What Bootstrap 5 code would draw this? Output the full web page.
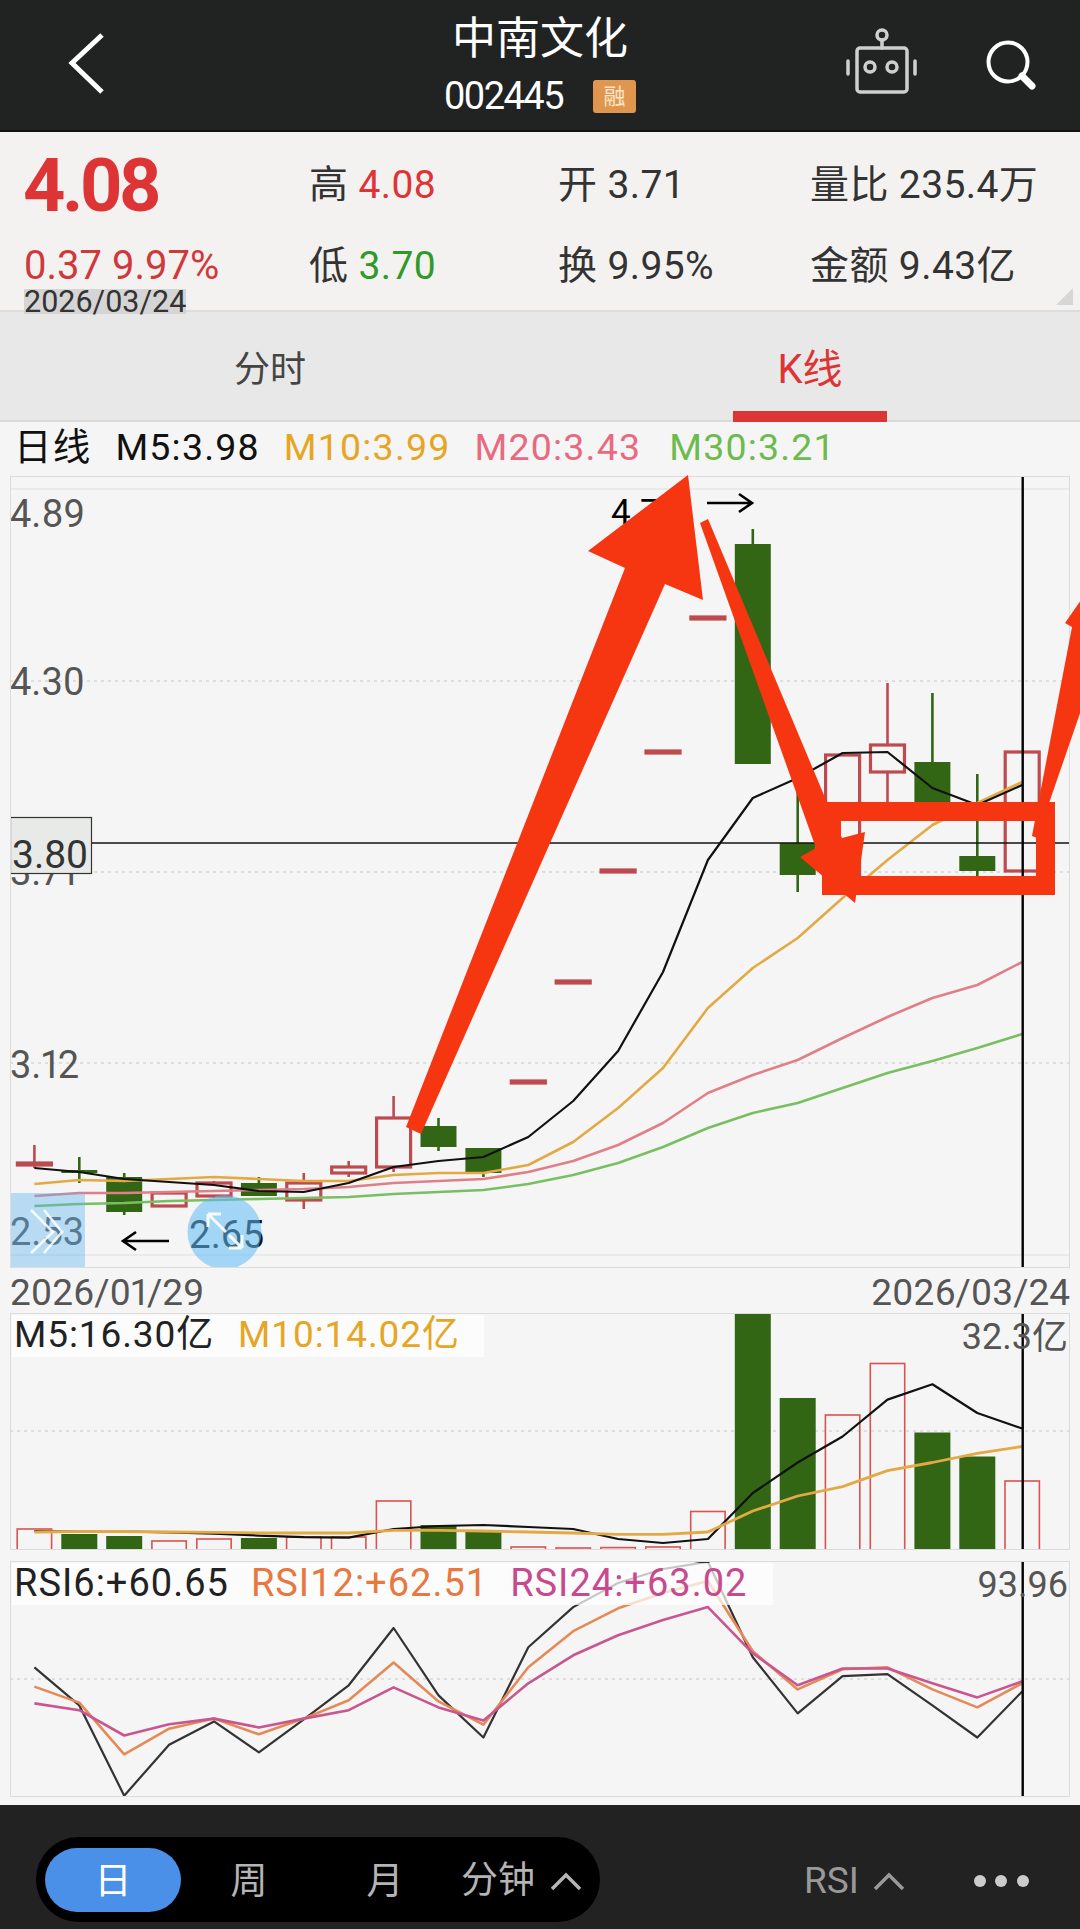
<!DOCTYPE html>
<html lang="zh-CN">
<head>
  <meta charset="UTF-8"/>
  <meta name="viewport" content="width=device-width, initial-scale=1.0"/>
  <title>中南文化 002445</title>
  <link href="https://cdn.jsdelivr.net/npm/bootstrap@5.3.0/dist/css/bootstrap.min.css" rel="stylesheet"/>
  <style>
    body { width: 1080px; height: 1929px; position: relative; overflow: hidden; background-color: #f5f5f5; font-family: Roboto, "Noto Sans CJK SC", sans-serif; color: #333; }
    svg { display: block; }

    .top-bar { height: 132px; background-color: #212322; border-bottom: 2px solid #111; }
    .top-side { width: 240px; }
    .stock-title { font-size: 44px; line-height: 52px; color: #fff; padding-top: 13px; }
    .stock-code { font-size: 38px; line-height: 44px; color: #fff; letter-spacing: -1.5px; gap: 30px; margin-top: 9px; }
    .margin-tag { width: 43px; height: 33px; background-color: #e0964f; color: #f9e6cc; font-size: 22px; line-height: 33px; letter-spacing: 0; border-radius: 3px; text-align: center; }

    .quote-grid { height: 180px; background-color: #f3f2f1; border-bottom: 2px solid #ddd; display: grid; grid-template-columns: 285px 249px 252px 1fr; grid-template-rows: 108px 72px; padding-left: 24px; position: relative; font-size: 39px; line-height: 50px; letter-spacing: .4px; }
    .quote-cell { padding-top: 1px; white-space: nowrap; }
    .quote-cell.top-row { padding-top: 28px; }
    .price-now { font-size: 74px; line-height: 108px; font-weight: 700; letter-spacing: -3.5px; color: #dd3436; margin-left: -1px; }
    .price-change { font-size: 40px; line-height: 46px; color: #d0393b; letter-spacing: 0; margin-top: 3px; height: 46px; white-space: nowrap; }
    .price-date { display: inline-block; font-size: 30.5px; line-height: 25px; height: 25px; background-color: #d5d5d5; color: #333; letter-spacing: 0; vertical-align: top; }
    .up { color: #dd3436; }
    .down { color: #2f9a28; }
    .corner-mark { position: absolute; right: 7px; bottom: 5px; width: 0; height: 0; border-left: 17px solid transparent; border-bottom: 17px solid #d6d6d6; }

    .tab-strip { height: 110px; background-color: #e8e8e8; border-bottom: 2px solid #d8d8d8; font-size: 36px; color: #444; }
    .tab-item { padding-top: 18px; width: 154px; height: 110px; text-align: center; line-height: 80px; }
    .tab-item.active { color: #dd3436; font-size: 40px; border-bottom: 11px solid #dd3436; }

    .ma-legend { height: 54px; padding-left: 14px; gap: 24px; font-size: 37.5px; line-height: 50px; letter-spacing: 1.2px; color: #111; }
    .c-ma10 { color: #e6a623; }
    .c-ma20 { color: #e86a80; }
    .c-ma30 { color: #6dbb4f; }

    .plot-box { margin-left: 10px; width: 1060px; position: relative; background-color: #f5f5f5; outline: 1.5px solid #dcdcdc; outline-offset: -1px; }
    .plot-main { height: 792px; }
    .plot-volume { height: 237px; margin-top: 1px; }
    .plot-rsi { height: 236px; margin-top: 11px; }
    .axis-text { font-size: 38px; fill: #555; font-variant-numeric: proportional-nums; }
    .date-row { height: 44px; margin: 0 10px; font-size: 37px; line-height: 50px; color: #555; font-variant-numeric: proportional-nums; }
    .plot-legend { position: absolute; left: 2px; top: 2px; height: 42px; background-color: rgba(255,255,255,.72); font-size: 37px; line-height: 40px; color: #222; letter-spacing: .9px; white-space: nowrap; padding-left: 2px; }
    .plot-legend.vol-legend { width: 472px; gap: 24px; }
    .plot-legend.rsi-legend { width: 761px; gap: 22px; font-size: 38px; letter-spacing: 1px; }
    .c-rsi12 { color: #e67840; }
    .c-rsi24 { color: #c84a8e; }
    .plot-peak { position: absolute; right: 2px; top: 4px; font-size: 36px; line-height: 40px; color: #555; }

    .bottom-bar { height: 124px; margin-top: 8px; background-color: #222; padding: 32px 0 0 36px; font-size: 37px; color: #b4b4b4; }
    .period-pill { width: 564px; height: 85px; background-color: #000; border-radius: 43px; padding: 11px 9px; }
    .period-item { width: 136px; height: 64px; line-height: 68px; text-align: center; border-radius: 32px; }
    .period-item.active { background-color: #4a90e8; color: #fff; }
    .period-more { gap: 15px; padding-left: 8px; padding-top: 3px; line-height: 62px; }
    .bar-right { margin-left: 204px; height: 88px; color: #999; gap: 14px; }
    .more-dots { margin-left: 46px; }
  </style>
</head>
<body>
  <!-- title bar -->
  <header class="top-bar d-flex justify-content-between">
    <div class="top-side">
      <svg width="240" height="130"><path d="M102 35 L72 63 L102 92" fill="none" stroke="#fff" stroke-width="5"/></svg>
    </div>
    <div class="d-flex flex-column align-items-center">
      <div class="stock-title">中南文化</div>
      <div class="stock-code d-flex align-items-center"><span>002445</span><span class="margin-tag">融</span></div>
    </div>
    <div class="top-side">
      <svg width="240" height="130" viewBox="840 0 240 130" fill="none">
        <g stroke="#cfcfcf" stroke-width="3.5" stroke-linecap="round">
          <rect x="857" y="48" width="50" height="44" rx="3"/>
          <circle cx="882" cy="35" r="5"/>
          <path d="M882 40V48M848 61V74M915 61V74"/>
          <circle cx="870" cy="67" r="5"/>
          <circle cx="892" cy="67" r="5"/>
        </g>
        <circle cx="1008" cy="62" r="19.5" stroke="#fff" stroke-width="4"/>
        <path d="M1022 76L1032 86" stroke="#fff" stroke-width="7" stroke-linecap="round"/>
      </svg>
    </div>
  </header>

  <!-- quote summary -->
  <section class="quote-grid">
    <div class="price-now">4.08</div>
    <div class="quote-cell top-row">高 <span class="up">4.08</span></div>
    <div class="quote-cell top-row">开 3.71</div>
    <div class="quote-cell top-row">量比 235.4万</div>
    <div>
      <div class="price-change">0.37 9.97%</div>
      <span class="price-date">2026/03/24</span>
    </div>
    <div class="quote-cell">低 <span class="down">3.70</span></div>
    <div class="quote-cell">换 9.95%</div>
    <div class="quote-cell">金额 9.43亿</div>
    <span class="corner-mark"></span>
  </section>

  <nav class="tab-strip d-flex">
    <div class="flex-fill d-flex justify-content-center"><span class="tab-item">分时</span></div>
    <div class="flex-fill d-flex justify-content-center"><span class="tab-item active">K线</span></div>
  </nav>

  <div class="ma-legend d-flex">
    <span>日线</span><span>M5:3.98</span><span class="c-ma10">M10:3.99</span><span class="c-ma20">M20:3.43</span><span class="c-ma30 ms-1">M30:3.21</span>
  </div>

  <div class="plot-box plot-main" id="kline"></div>

  <div class="date-row d-flex justify-content-between"><span>2026/01/29</span><span>2026/03/24</span></div>

  <div class="plot-box plot-volume">
    <div id="volume"></div>
    <div class="plot-legend vol-legend d-flex"><span>M5:16.30亿</span><span class="c-ma10">M10:14.02亿</span></div>
    <div class="plot-peak">32.3亿</div>
  </div>

  <div class="plot-box plot-rsi">
    <div id="rsi"></div>
    <div class="plot-legend rsi-legend d-flex"><span>RSI6:+60.65</span><span class="c-rsi12">RSI12:+62.51</span><span class="c-rsi24">RSI24:+63.02</span></div>
    <div class="plot-peak">93.96</div>
  </div>

  <footer class="bottom-bar d-flex">
    <div class="period-pill d-flex">
      <span class="period-item active">日</span>
      <span class="period-item">周</span>
      <span class="period-item">月</span>
      <span class="period-more d-flex align-items-center">分钟
        <svg width="32" height="20"><path d="M2 18L16 4L30 18" fill="none" stroke="#b4b4b4" stroke-width="3.5"/></svg>
      </span>
    </div>
    <div class="bar-right d-flex align-items-center">
      <span>RSI</span>
      <svg width="32" height="20"><path d="M2 18L16 4L30 18" fill="none" stroke="#999" stroke-width="3.5"/></svg>
      <svg class="more-dots" width="78" height="14"><g fill="#ccc"><circle cx="15" cy="7" r="6"/><circle cx="36" cy="7" r="6"/><circle cx="58" cy="7" r="6"/></g></svg>
    </div>
  </footer>

  <!-- hand-drawn red marks on top of the chart -->
  <svg class="position-absolute top-0 start-0 pe-none" width="1080" height="1929" fill="#f63511">
    <path d="M688 475L703 600L665 584L421 1134L406 1127L625 568L588 551Z"/>
    <path d="M708 519L842 838L865 832L855 903L800 857L816 848L700 523Z"/>
    <path fill-rule="evenodd" d="M822 802H1055V895H822ZM841 821V876H1036V821Z"/>
    <path d="M1088 590L1065 623L1072 627L1032 836L1037 838L1088 690Z"/>
  </svg>

  <script src="https://cdn.jsdelivr.net/npm/bootstrap@5.3.0/dist/js/bootstrap.bundle.min.js"></script>
  <script>
    const GREEN = "#336614", RED = "#bd4a4e";
    const barX = i => 34.4 + 44.9 * i;
    const BODY = 36;

    // [body top, body bottom, wick top, wick bottom, up?]
    const candles = [
      [1163,1165,1145,1168,1], [1170,1173,1157,1183,0], [1177,1212,1173,1215,0], [1193,1206,1193,1206,1],
      [1183,1196,1181,1198,1], [1183,1196,1177,1196,0], [1183,1200,1173,1209,1], [1167,1173,1161,1177,1],
      [1118,1167,1096,1172,1], [1126,1147,1118,1151,0], [1148,1173,1148,1177,0], [1081,1083,1081,1083,1],
      [981,983,981,983,1], [870,872,870,872,1], [751,753,751,753,1], [617,619,617,619,1],
      [544,764,529,764,0], [843,875,780,892,0], [755,877,755,877,1], [745,772,683,803,1],
      [762,805,693,805,0], [856,871,774,877,0], [752,871,752,871,1]
    ];
    const ma5 = [1168,1172,1179,1182,1185,1191,1192,1183,1167,1161,1157,1137,1101,1051,972,860,798,778,753,752,788,805,785];
    const ma10 = [1184,1180,1181,1179,1177,1179,1181,1181,1175,1173,1173,1165,1142,1108,1068,1008,968,938,898,860,825,803,782];
    const ma20 = [1196,1193,1193,1192,1191,1190,1189,1187,1183,1181,1179,1172,1161,1145,1123,1093,1075,1060,1038,1017,998,985,962];
    const ma30 = [1206,1204,1203,1201,1200,1199,1198,1197,1194,1192,1190,1184,1175,1163,1147,1128,1113,1103,1088,1073,1061,1048,1034];

    const volumes = [21,16,14,9,11,12,13,13,49,25,18,3,2,2.4,3,38.5,237,152,135,186.5,117.5,93.5,69];
    const volUp = [1,0,0,1,1,0,1,1,1,0,0,1,1,1,1,1,0,0,1,1,0,0,1];
    const volMa5 = [19,18.5,18.5,17.6,16.4,14.4,12.8,12.4,21,24,25,23,21,11,7,11,57,87.5,113.5,150.4,165.7,137,121.5];
    const volMa10 = [18,18.5,18.5,18,17.6,17,17,17,19.7,19.7,19,18,17,15.6,15.6,18,39,54,63.4,79.4,87.5,96.7,103.5];

    const rsi6 = [106.3,144.4,234.7,183.7,160.4,191.3,158.4,124.3,67,134.4,176.5,86.2,46.1,22,8,.8,96.3,152.4,115.1,113.1,144.4,176.5,130.4];
    const rsi12 = [125.6,141.6,193.3,167.7,157.6,173.3,157.6,139.2,101.5,140.4,163.7,106.3,70.2,47.3,32.1,20,90.3,128.4,108.3,106.3,128.4,146.4,122.3];
    const rsi24 = [142.4,149.2,174.5,163.3,157.6,166.5,157.6,149.2,126.4,146.4,159.6,122.3,94.3,74.2,59,46.1,92.3,124.3,107.5,107.5,122.3,136.4,120.3];

    const polyline = (ys, color, width = 2.6) =>
      `<polyline fill="none" stroke="${color}" stroke-width="${width}" stroke-linejoin="round" points="${ys.map((y, i) => barX(i) + "," + y).join(" ")}"/>`;
    const grid = y => `<line x1="10" x2="1070" y1="${y}" y2="${y}" stroke="#d6d6d6" stroke-width="1.5" stroke-dasharray="3 4"/>`;
    const crossV = (top, bottom) => `<line x1="1022.7" x2="1022.7" y1="${top}" y2="${bottom}" stroke="#000" stroke-width="2.4"/>`;
    const label = (text, x, y) => `<text class="axis-text" x="${x}" y="${y}">${text}</text>`;

    function drawCandle(c, i) {
      const x = barX(i), [top, bottom, wickTop, wickBottom, up] = c;
      const color = up ? RED : GREEN;
      let s = "";
      if (wickTop < top) s += `<line x1="${x}" x2="${x}" y1="${wickTop}" y2="${top}" stroke="${color}" stroke-width="2.6"/>`;
      if (wickBottom > bottom) s += `<line x1="${x}" x2="${x}" y1="${bottom}" y2="${wickBottom}" stroke="${color}" stroke-width="2.6"/>`;
      if (up) {
        s += `<rect x="${x - BODY / 2 + 1}" y="${top}" width="${BODY - 2}" height="${bottom - top}" fill="none" stroke="${color}" stroke-width="3.2"/>`;
      } else {
        s += `<rect x="${x - BODY / 2}" y="${top}" width="${BODY}" height="${bottom - top}" fill="${color}"/>`;
      }
      return s;
    }

    function drawKline() {
      let s = `<svg width="1060" height="792" viewBox="10 476 1060 792">`;
      s += `<line x1="10" x2="1070" y1="489" y2="489" stroke="#e6e6e6" stroke-width="1.5"/>`;
      s += `<line x1="10" x2="1070" y1="1255" y2="1255" stroke="#e6e6e6" stroke-width="1.5"/>`;
      s += grid(681) + grid(872) + grid(1063);
      s += candles.map(drawCandle).join("");
      s += polyline(ma30, "#78bf62") + polyline(ma20, "#e07f88") + polyline(ma10, "#e3a945") + polyline(ma5, "#111", 2.2);
      s += label("4.89", 10, 527) + label("4.30", 10, 695) + label("3.71", 10, 885) + label("3.12", 10, 1078) + label("2.53", 10, 1245);
      s += `<text x="611" y="524" font-size="35" fill="#000">4.77</text>`;
      s += `<text x="189" y="1248" font-size="38.5" fill="#111">2.65</text>`;
      // high / low arrows
      s += `<path d="M707 503H752M739 494L752 503L739 512M169 1241H123M136 1232L123 1241L136 1250" fill="none" stroke="#000" stroke-width="2.6"/>`;
      // crosshair with its price tag
      s += `<rect x="10.5" y="817.5" width="81" height="56" fill="#e8eae8" stroke="#333" stroke-width="1.2"/>`;
      s += `<line x1="92" x2="1070" y1="843" y2="843" stroke="#111" stroke-width="1.6"/>`;
      s += `<text x="12" y="868" font-size="39" fill="#333">3.80</text>`;
      s += crossV(476, 1268);
      // floating touch buttons
      s += `<rect x="10" y="1193" width="75" height="75" fill="rgb(90,180,240)" fill-opacity=".4"/>`;
      s += `<path d="M31 1210L53 1232L31 1253M44 1210L62 1232L44 1253" fill="none" stroke="#fff" stroke-width="2.6" stroke-opacity=".85"/>`;
      s += `<circle cx="224.5" cy="1232" r="37" fill="rgb(95,185,245)" fill-opacity=".55"/>`;
      s += `<path d="M208 1214L226 1232M208 1214H221M208 1214V1227M242 1248L229 1235M242 1248H229M242 1248V1235" fill="none" stroke="#fff" stroke-width="3" stroke-opacity=".9"/>`;
      s += `</svg>`;
      document.getElementById("kline").innerHTML = s;
    }

    function drawVolume() {
      let s = `<svg width="1060" height="237" viewBox="10 1313 1060 237">`;
      s += grid(1431);
      volumes.forEach((h, i) => {
        const x = barX(i) - BODY / 2, y = 1550 - h;
        s += volUp[i]
          ? `<rect x="${x + .8}" y="${y}" width="${BODY - 1.6}" height="${h}" fill="none" stroke="#d9534f" stroke-width="1.6"/>`
          : `<rect x="${x}" y="${y}" width="${BODY}" height="${h}" fill="${GREEN}"/>`;
      });
      s += polyline(volMa5.map(h => 1550 - h), "#111", 2.2) + polyline(volMa10.map(h => 1550 - h), "#e3a945", 2.8);
      s += crossV(1313, 1550) + `</svg>`;
      document.getElementById("volume").innerHTML = s;
    }

    function drawRsi() {
      const toY = arr => arr.map(v => 1561 + v);
      let s = `<svg width="1060" height="236" viewBox="10 1561 1060 236">`;
      s += grid(1679);
      s += polyline(toY(rsi6), "#333", 2.2) + polyline(toY(rsi12), "#e58a56") + polyline(toY(rsi24), "#c9568f");
      s += crossV(1561, 1797) + `</svg>`;
      document.getElementById("rsi").innerHTML = s;
    }

    drawKline();
    drawVolume();
    drawRsi();
  </script>
</body>
</html>
